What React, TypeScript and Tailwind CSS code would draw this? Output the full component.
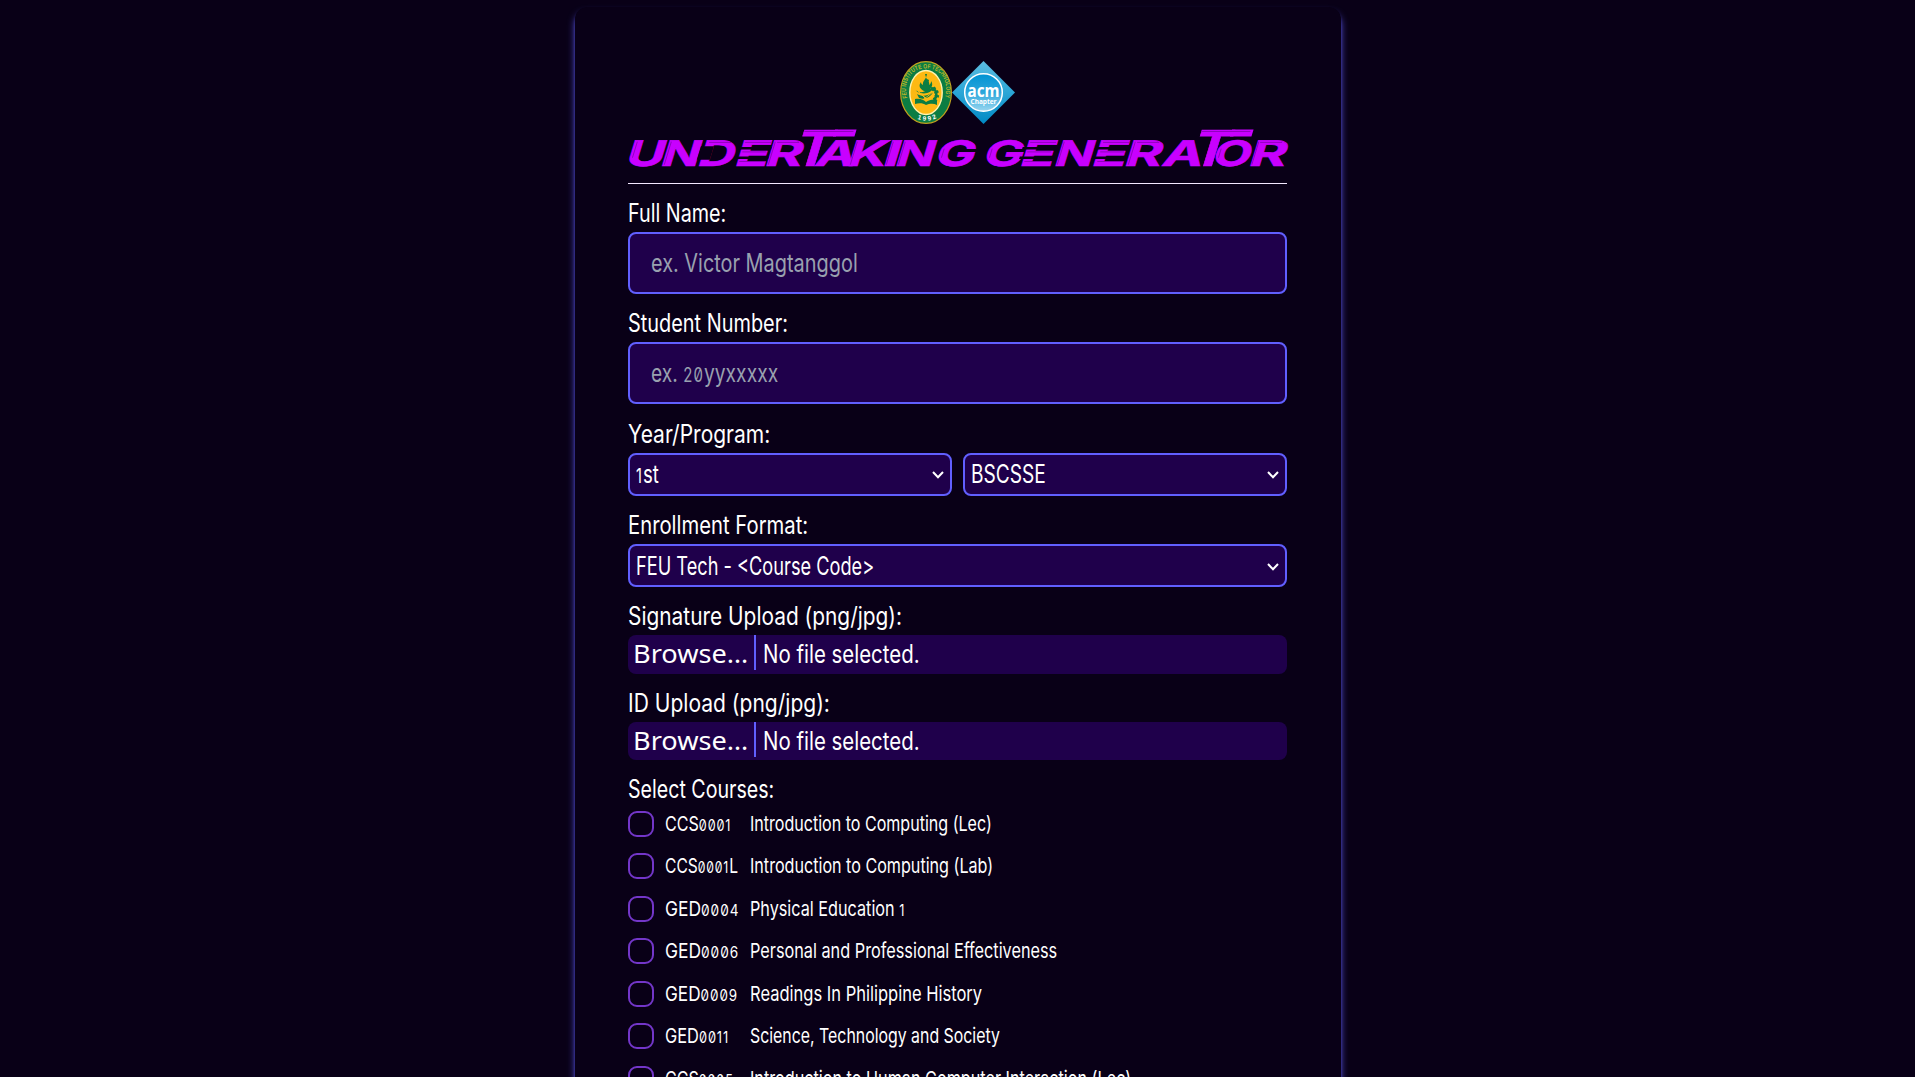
import React, { useLayoutEffect, useRef, useState } from "react";

type FitProps = { text: string; width: number; className?: string };

/* Condensed text: squeezes one line to the given width; digits sit at x-height. */
function Fit({ text, width, className = "" }: FitProps) {
  const ref = useRef<HTMLSpanElement>(null);
  const [scale, setScale] = useState(1);
  useLayoutEffect(() => {
    if (ref.current) setScale(width / ref.current.offsetWidth);
  }, [text, width]);
  return (
    <span className={`block whitespace-nowrap ${className}`} style={{ width }}>
      <span ref={ref} className="inline-block origin-left slashed-zero" style={{ transform: `scaleX(${scale})` }}>
        {text.split(/(\d+)/).map((part, i) =>
          /\d/.test(part) ? (
            <span key={i} className="text-[0.78em] tracking-[0.07em]">{part}</span>
          ) : (
            part
          )
        )}
      </span>
    </span>
  );
}

function Field({ label, width, children }: { label: string; width: number; children: React.ReactNode }) {
  return (
    <div className="mt-[15.33px]">
      <Fit text={label} width={width} className="mb-[5px] h-7" />
      {children}
    </div>
  );
}

function Select({ text, width }: { text: string; width: number }) {
  return (
    <div className="flex h-[43px] flex-1 items-center justify-between rounded-lg border-2 border-[#615fff] bg-[#1f004b] pr-[6px] pl-[6px]">
      <Fit text={text} width={width} className="h-7" />
      <svg width="12" height="8" viewBox="0 0 12 8" className="mt-[2px]" fill="none" stroke="white" strokeWidth="2">
        <path d="M1 1l5 5.3L11 1" />
      </svg>
    </div>
  );
}

function FileInput() {
  return (
    <div className="flex h-[38.2px] rounded-lg bg-[#1f004b] pl-[5px]">
      <Fit text="Browse…" width={115} className="h-9 font-['Noto_Sans'] text-[25.5px] leading-9" />
      <div className="ml-[6px] h-[35px] w-[2px] bg-[#615fff]" />
      <Fit text="No file selected." width={157} className="mt-[5px] ml-[7px] h-7" />
    </div>
  );
}

function Seal() {
  return (
    <svg width="52" height="63" viewBox="0 0 52 63">
      <defs>
        <path id="sealArc" d="M7.2 37 C2.500 19 12 7.500 26 7.500 C40 7.500 49.500 19 44.800 37" />
        <path id="yearArc" d="M15 57 Q26 62.500 37 57" />
      </defs>
      <ellipse cx="26" cy="31.5" rx="25.4" ry="30.9" fill="#0b7d43" stroke="#c0a21f" strokeWidth="1.2" />
      <ellipse cx="26" cy="31.5" rx="16.2" ry="22" fill="#fdb913" stroke="#fff3b0" strokeWidth="1.4" />
      <text fontSize="6.4" fontWeight="600" fill="#b9b52c" fontFamily="Liberation Sans, sans-serif">
        <textPath href="#sealArc" textLength="82" lengthAdjust="spacingAndGlyphs">FEU INSTITUTE OF TECHNOLOGY</textPath>
      </text>
      <text fontSize="6.4" fontWeight="700" fill="white" fontFamily="Liberation Sans, sans-serif">
        <textPath href="#yearArc" startOffset="2.500" textLength="20">1992</textPath>
      </text>
      <g fill="#0b7d43">
        <path d="M25 13c1 3 1 4 2 5l2 1c-1 2 1 3 0 5 2-1 2-3 2-4 3 4 0 8-4 10h-3c-4-2-6-5-3-9 0 2 1 2 2 3-1-4 3-5 4-11z" />
        <path d="M15.500 29c4 3 8 3 13-1l6-2c-3 6-10 8-17 5zM17 33c5 3 11 2 16-2-2 5-8 8-14 6z" />
        <path d="M15 38c5-1 9 1 11 3 3-2 7-3 11-2v5c-4-2-8-1-11 0-3-2-7-2-11-1z" />
      </g>
      <path d="M31 27c6 1 7 8 3 12" fill="none" stroke="#0b7d43" strokeWidth="2.4" />
      <path d="M33 27.500c5 3 5 9 1 12" fill="none" stroke="#0b7d43" strokeWidth="4.500" strokeDasharray="2 2" />
      <path d="M17 29l9 9M20 32l8 7M24 38l9-7" stroke="#fdb913" strokeWidth="0.9" />
    </svg>
  );
}

function AcmLogo() {
  return (
    <svg width="63" height="63" viewBox="0 0 63 63">
      <defs>
        <linearGradient id="diamond" x1="0" y1="0" x2="0" y2="1">
          <stop offset="0" stopColor="#5cbce0" />
          <stop offset="0.5" stopColor="#2ba6d6" />
          <stop offset="1" stopColor="#0089c4" />
        </linearGradient>
        <linearGradient id="disc" x1="0" y1="0" x2="0" y2="1">
          <stop offset="0" stopColor="#0092d2" />
          <stop offset="0.5" stopColor="#2ba6db" />
          <stop offset="1" stopColor="#9ad7f0" />
        </linearGradient>
      </defs>
      <path d="M31.500 0L63 31.500L31.500 63L0 31.500z" fill="url(#diamond)" />
      <circle cx="31.500" cy="31.500" r="18.800" fill="url(#disc)" stroke="white" strokeWidth="1.500" />
      <text x="15.500" y="35.500" fontSize="17" fontWeight="700" fill="white" textLength="32" lengthAdjust="spacingAndGlyphs" fontFamily="Noto Sans, sans-serif">acm</text>
      <text x="18.500" y="43.200" fontSize="7.800" fontWeight="700" fill="white" textLength="26" lengthAdjust="spacingAndGlyphs" fontFamily="Open Sans, sans-serif">Chapter</text>
    </svg>
  );
}

/* letter, left edge, advance */
const letters: [string, number, number][] = [
  ["U", -4, 38.5], ["N", 31, 39], ["D", 68, 37], ["E", 105, 34], ["R", 135, 37.5], ["T", 163.5, 37], ["A", 185.5, 40],
  ["K", 217.5, 39], ["I", 253, 17], ["N", 265.5, 39], ["G", 305.5, 39.5], ["G", 353.5, 40], ["E", 390, 35],
  ["N", 424.5, 39], ["E", 462, 35], ["R", 494.5, 37.5], ["T", 561, 37], ["A", 532.5, 40.5], ["O", 582.5, 38.5], ["R", 619, 37.5],
];

function Title() {
  return (
    <svg width="664" height="46" viewBox="-2 0 664 46" className="-ml-[2px] block overflow-visible" aria-label="Undertaking Generator">
      <g transform="translate(0 41.700) skewX(-17)" fill="#c800ff" fontFamily="Inter, sans-serif" fontWeight="700">
        {letters.map(([ch, x, w], i) => (
          <text key={i} x={x} y="0" fontSize={ch === "T" ? 49.5 : 35.2} textLength={w} lengthAdjust="spacingAndGlyphs" stroke="#c800ff" strokeWidth="0.6">
            {ch}
          </text>
        ))}
        <path d="M196 -36.200h21.500v7h-21.500zM593 -36.200h21.500v7h-21.500z" />
        <path d="M104 -18.700h34v2.600h-34zM104 -9.200h34v2.600h-34zM389 -18.700h35v2.600h-35zM389 -9.200h35v2.600h-35zM461.500 -18.700h33.500v2.600h-33.500zM461.500 -9.200h33.500v2.600h-33.500zM67 -19.500h13v13.500h-13z" fill="#090017" />
        <path d="M166 -34.200h49M563 -34.200h49M74 -23.300h22M110 -23.300h26M142 -23.300h22M395 -23.300h26M468 -23.300h26M502 -23.300h22M625 -23.300h22M110 -13.800h24M395 -13.800h24M468 -13.800h24M110 -4.200h26M395 -4.200h26M468 -4.200h26M2 -24v16M36 -24v23M270 -24v23M429 -24v23M258 -24v23M222 -24v23M140 -24v23M500 -24v23M623.500 -24v23M311 -17v9M359 -17v9M588 -17v9" fill="none" stroke="#6d0096" strokeWidth="0.8" opacity="0.7" />
      </g>
    </svg>
  );
}

const courses: [string, number, string, number][] = [
  ["CCS0001", 66, "Introduction to Computing (Lec)", 242],
  ["CCS0001L", 73, "Introduction to Computing (Lab)", 243],
  ["GED0004", 74, "Physical Education 1", 155],
  ["GED0006", 74, "Personal and Professional Effectiveness", 307],
  ["GED0009", 73, "Readings In Philippine History", 232],
  ["GED0011", 64, "Science, Technology and Society", 250],
  ["CCS0005", 69, "Introduction to Human Computer Interaction (Lec)", 381],
];

export default function App() {
  return (
    <div className="h-[1080px] w-[1920px] overflow-hidden bg-white">
      <div className="flex h-[1077px] w-[1915px] justify-center overflow-hidden bg-[#090017] pt-[7px] font-['Inter'] text-[25px] leading-7 text-white">
        <div className="h-[1500px] w-[766px] rounded-xl bg-[#090017] px-[53.2px] pt-[54px] shadow-[0_6px_8px_-1px_#615fff,0_3px_4px_-2px_#615fff]">
          <div className="flex h-[63px] justify-center">
            <Seal />
            <AcmLogo />
          </div>
          <div className="h-[59px]">
            <Title />
          </div>
          <div className="-mb-[0.6px] h-px bg-[#f3e8ff]" />

          <Field label="Full Name:" width={98}>
            <div className="flex h-[62.2px] items-center rounded-lg border-2 border-[#615fff] bg-[#1f004b] px-[21.500px] text-[#99a1af]">
              <Fit text="ex. Victor Magtanggol" width={207} className="h-7" />
            </div>
          </Field>
          <Field label="Student Number:" width={160}>
            <div className="flex h-[62.2px] items-center rounded-lg border-2 border-[#615fff] bg-[#1f004b] px-[21.500px] text-[#99a1af]">
              <Fit text="ex. 20yyxxxxx" width={127} className="h-7" />
            </div>
          </Field>
          <Field label="Year/Program:" width={142}>
            <div className="flex gap-[11px]">
              <Select text="1st" width={23} />
              <Select text="BSCSSE" width={75} />
            </div>
          </Field>
          <Field label="Enrollment Format:" width={180}>
            <div className="flex">
              <Select text="FEU Tech - <Course Code>" width={238} />
            </div>
          </Field>
          <Field label="Signature Upload (png/jpg):" width={274}>
            <FileInput />
          </Field>
          <Field label="ID Upload (png/jpg):" width={202}>
            <FileInput />
          </Field>
          <Field label="Select Courses:" width={146}>
            <div className="mt-[7.500px] flex flex-col gap-[16.500px] text-[20.500px]">
              {courses.map(([code, cw, name, nw]) => (
                <div key={code} className="flex h-[26px] items-center">
                  <div className="mr-[11px] size-[26px] rounded-[9px] border-2 border-[#7336c9]" />
                  <div className="w-[85px]">
                    <Fit text={code} width={cw} className="-mt-[4px] h-6" />
                  </div>
                  <Fit text={name} width={nw} className="-mt-[4px] h-6" />
                </div>
              ))}
            </div>
          </Field>
        </div>
      </div>
    </div>
  );
}
